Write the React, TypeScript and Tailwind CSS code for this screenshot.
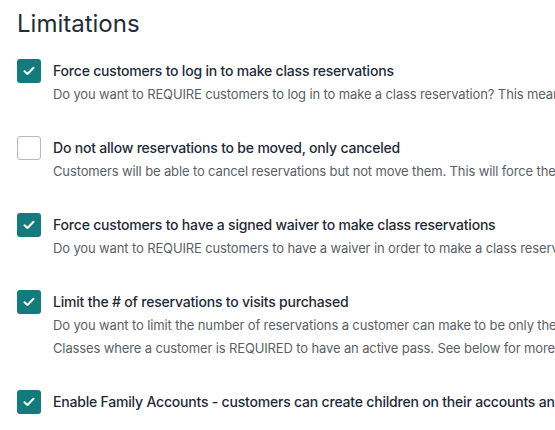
import React from "react";

type Item = { checked: boolean; title: string; lines: string[] };

const items: Item[] = [
  {
    checked: true,
    title: "Force customers to log in to make class reservations",
    lines: [
      "Do you want to REQUIRE customers to log in to make a class reservation? This means they will need an account.",
    ],
  },
  {
    checked: false,
    title: "Do not allow reservations to be moved, only canceled",
    lines: [
      "Customers will be able to cancel reservations but not move them. This will force them to cancel and rebook.",
    ],
  },
  {
    checked: true,
    title: "Force customers to have a signed waiver to make class reservations",
    lines: [
      "Do you want to REQUIRE customers to have a waiver in order to make a class reservation?",
    ],
  },
  {
    checked: true,
    title: "Limit the # of reservations to visits purchased",
    lines: [
      "Do you want to limit the number of reservations a customer can make to be only the number of visits purchased?",
      "Classes where a customer is REQUIRED to have an active pass. See below for more details.",
    ],
  },
  {
    checked: true,
    title: "Enable Family Accounts - customers can create children on their accounts and book for them",
    lines: [],
  },
];

function Check({ checked }: { checked: boolean }) {
  if (!checked) {
    return (
      <div className="w-6 h-6 shrink-0 rounded-[3px] border border-[#b9b9b9] bg-white" />
    );
  }
  return (
    <div className="w-6 h-6 shrink-0 rounded-[3px] bg-[#137b7e] flex items-center justify-center">
      <svg width="12" height="10" viewBox="0 0 12 10" fill="none">
        <path
          d="M1.5 5.2 L4.5 8 L10.5 1.8"
          stroke="white"
          strokeWidth="2"
          strokeLinecap="round"
          strokeLinejoin="round"
        />
      </svg>
    </div>
  );
}

export default function App() {
  return (
    <div
      className="w-[555px] h-[430px] overflow-hidden bg-white pl-[17px] pt-2"
      style={{ fontFamily: "Inter, 'Noto Sans', sans-serif" }}
    >
      <h1 className="text-[24px] leading-8 font-normal text-[#1f2d3b] whitespace-nowrap">
        Limitations
      </h1>
      <div className="mt-[19px] flex flex-col gap-[30px]">
        {items.map((it, i) => (
          <div key={i} className="flex gap-3 items-start">
            <Check checked={it.checked} />
            <div className="flex flex-col">
              <div className="text-[14px] leading-6 font-medium tracking-[-0.2px] text-[#1f2a37] whitespace-nowrap">
                {it.title}
              </div>
              {it.lines.map((l, j) => (
                <div
                  key={j}
                  className="text-[13px] leading-[23px] tracking-[-0.13px] text-[#5a5f66] whitespace-nowrap"
                >
                  {l}
                </div>
              ))}
            </div>
          </div>
        ))}
      </div>
    </div>
  );
}
